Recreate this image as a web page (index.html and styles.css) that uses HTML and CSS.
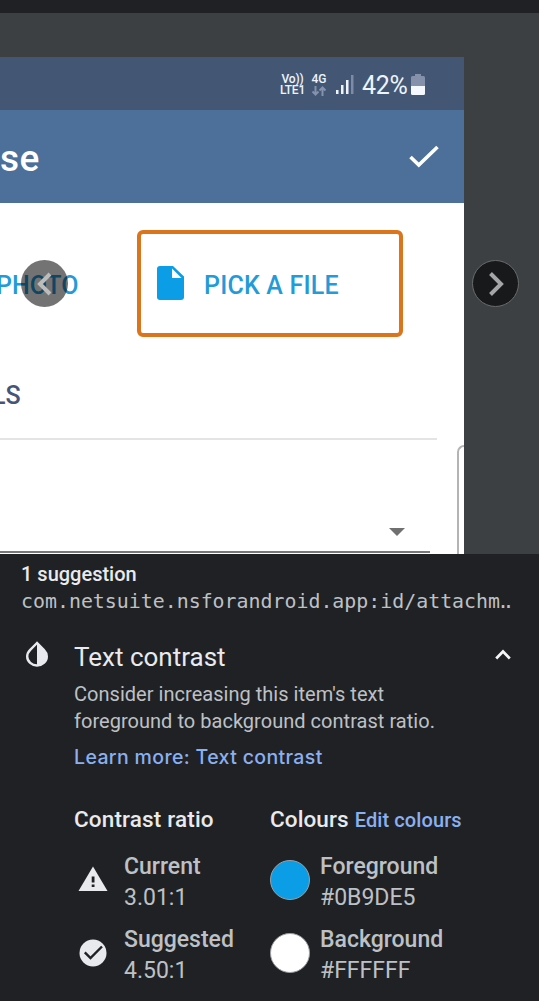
FILE: index.html
```html
<!DOCTYPE html>
<html lang="en">
<head>
<meta charset="utf-8">
<title>Text contrast</title>
<link rel="stylesheet" href="styles.css">
</head>
<body>
<main class="viewer">
  <section class="phone">
    <div class="status">
      <div class="volte"><span>Vo))</span><span>LTE1</span></div>
      <div class="network"><span>4G</span>
        <svg width="16" height="10" viewBox="0 0 16 10" fill="none" stroke="#8492ad" stroke-width="2"><path d="M4.500 0v8.500M1.500 5.500l3 3 3-3M11.500 10V1.500M8.500 4.500l3-3 3 3"/></svg>
      </div>
      <svg class="signal" width="18" height="20" viewBox="0 0 18 20"><path fill="#edf4ff" d="M0 15h2.500v4H0zM5 10h2.500v9H5zM10 5h2.500v14H10z"/><path fill="#7d8ba7" d="M15 0h2.500v19H15z"/></svg>
      <span class="percent">42%</span>
      <svg class="battery" width="14" height="21" viewBox="0 0 14 21"><path fill="#8591ab" d="M4 0h6v2h2.500q1.500 0 1.500 1.500V12H0V3.500Q0 2 1.500 2H4z"/><path fill="#f5f9ff" d="M0 12h14v7.500q0 1.500-1.500 1.500h-11Q0 21 0 19.500z"/></svg>
    </div>
    <div class="appbar">
      <span class="apptitle">se</span>
      <svg width="30" height="24" viewBox="0 0 30 24" fill="none" stroke="#fff" stroke-width="3.600"><path d="M1.500 12l8.300 8L28.500 2"/></svg>
    </div>
    <div class="actions">
      <span class="photo">PHOTO</span>
      <div class="pick">
        <svg width="27" height="34" viewBox="0 0 27 34"><path fill="#0b9de5" d="M3 0h13l11 10.500V31q0 3-3 3H3q-3 0-3-3V3q0-3 3-3z"/><path fill="#fff" d="M15 2.500V12h9.500z"/></svg>
        <span class="picktext">PICK A FILE</span>
      </div>
    </div>
    <div class="details">LS</div>
    <div class="form">
      <div class="select"><svg width="16" height="8" viewBox="0 0 16 8"><path fill="#707070" d="M0 0h16L8 8z"/></svg></div>
      <div class="nextfield"></div>
    </div>
  </section>
  <button class="nav prev" aria-label="Previous"><svg width="16" height="24" viewBox="0 0 16 24" fill="none" stroke="#bcbcbc" stroke-width="4"><path d="M13 2L3 12l10 10"/></svg></button>
  <button class="nav next" aria-label="Next"><svg width="16" height="24" viewBox="0 0 16 24" fill="none" stroke="#a5a6a8" stroke-width="4"><path d="M2.500 1.500L13 12 2.500 22.500"/></svg></button>
</main>
<section class="panel">
  <div class="count">1 suggestion</div>
  <div class="resource">com.netsuite.nsforandroid.app:id/attachm<span class="dots">..</span></div>
  <div class="issue">
    <svg class="drop" width="22" height="26" viewBox="0 0 22 26"><path fill="none" stroke="#e8eaed" stroke-width="2.400" d="M11 2L4.200 8.800C.2 12.800.2 18.200 4.200 21.800c3.800 3.500 9.800 3.500 13.600 0 4-3.600 4-9 0-13z"/><path fill="#e8eaed" d="M11 1.500l7 7c4 4 4 10 0 13.500-2 1.700-4.500 2.400-7 2.400z"/></svg>
    <div class="body">
      <div class="heading"><span>Text contrast</span><svg width="16" height="11" viewBox="0 0 16 11" fill="none" stroke="#f4f5f7" stroke-width="2.700"><path d="M1.200 9.500L8 2.500l6.800 7"/></svg></div>
      <p class="desc">Consider increasing this item's text<br>foreground to background contrast ratio.</p>
      <a class="learn">Learn more: Text contrast</a>
      <div class="columns">
        <div class="col ratios">
          <div class="coltitle">Contrast ratio</div>
          <div class="item"><svg class="mark" width="30" height="26" viewBox="0 0 30 26"><path fill="#e8eaed" d="M15 .5L29.500 25H.5z"/><path fill="#202124" d="M13.700 10.500h2.800v6h-2.800zM13.700 18.500h2.800v2.500h-2.800z"/></svg><div class="value"><b>Current</b><span>3.01:1</span></div></div>
          <div class="item"><svg class="mark" width="30" height="28" viewBox="0 0 30 28"><circle cx="15" cy="14" r="13.500" fill="#e8eaed"/><path fill="none" stroke="#202124" stroke-width="2.400" d="M6.800 13.300l5.700 5.700L24 7.500"/></svg><div class="value"><b>Suggested</b><span>4.50:1</span></div></div>
        </div>
        <div class="col colours">
          <div class="coltitle">Colours<a class="edit">Edit colours</a></div>
          <div class="item"><i class="swatch blue"></i><div class="value"><b>Foreground</b><span>#0B9DE5</span></div></div>
          <div class="item"><i class="swatch"></i><div class="value"><b>Background</b><span>#FFFFFF</span></div></div>
        </div>
      </div>
    </div>
  </div>
</section>
</body>
</html>
```

FILE: styles.css
```css
* { box-sizing: border-box; }
body { margin: 0; display: flow-root; width: 539px; height: 1001px; overflow: hidden; background: #202124; font-family: Roboto, "Noto Sans", sans-serif; color: #bdc1c6; white-space: nowrap; }
svg { display: block; flex: none; }
.viewer { position: relative; height: 541px; margin-top: 13px; padding-top: 44px; background: #3c4043; overflow: hidden; }
.phone { width: 463.600px; height: 497px; background: #fff; overflow: hidden; }
.status { height: 53px; background: #435775; display: flex; align-items: flex-start; padding: 17px 0 0 280px; color: #edf4ff; }
.volte, .network { display: flex; flex-direction: column; font-size: 12px; font-weight: 500; line-height: 11px; align-items: center; }
.volte { width: 25px; letter-spacing: -.2px; }
.network { width: 16px; margin-left: 6px; }
.network svg { margin-top: 1px; }
.signal { margin: 1px 0 0 9px; }
.percent { font-size: 25px; line-height: 24px; margin: 0 0 0 8px; width: 46px; letter-spacing: -.3px; }
.battery { margin-left: 3px; }
.appbar { height: 93px; background: #4c7099; display: flex; align-items: center; justify-content: space-between; padding-right: 25px; color: #fff; }
.apptitle { font-size: 37px; font-weight: 500; line-height: 42px; margin-top: 5px; letter-spacing: .4px; }
.appbar svg { margin-top: 1px; }
.actions { height: 135px; display: flex; align-items: flex-start; padding-top: 27px; color: #249bd7; font-size: 25px; font-weight: 500; line-height: 30px; }
.photo { width: 141px; margin: 41px 0 0 -4px; }
.pick { width: 266px; height: 107px; border: 4px solid #dc741b; border-radius: 6px; display: flex; align-items: center; padding-left: 16px; gap: 20px; }
.pick svg { margin-top: -1px; }
.picktext { margin-top: 5px; letter-spacing: .2px; }
.details { height: 102px; width: 437px; border-bottom: 2px solid #e4e4e4; color: #465577; font-size: 25px; line-height: 30px; font-weight: 500; padding-top: 43px; text-indent: -8px; }
.form { height: 115px; display: flex; justify-content: space-between; }
.select { width: 430px; height: 113px; border-bottom: 2px solid #777; display: flex; justify-content: flex-end; align-items: flex-end; padding: 0 25px 15px 0; }
.nextfield { width: 7px; height: 120px; margin-top: 5px; border: solid #b4b4b4; border-width: 2px 0 0 2px; border-radius: 9px 0 0 0; }
.nav { position: absolute; top: 247px; width: 47px; height: 47px; border-radius: 50%; border: 1px solid #6a6b6d; display: flex; align-items: center; justify-content: center; padding: 0; background: #18191b; }
.prev { left: 21px; border: 0; background: rgba(0,0,0,.55); }
.next { left: 472px; }
.panel { height: 447px; padding: 8px 0 0 22px; }
.count { font-size: 20px; font-weight: 500; line-height: 24px; color: #e8eaed; margin-left: -1px; }
.resource { margin: 3px 0 0 -1px; font-family: "DejaVu Sans Mono", monospace; font-size: 19.900px; line-height: 26px; }
.dots { margin-left: -3px; letter-spacing: -6.500px; }
.issue { display: flex; margin-top: 26px; }
.drop { margin: 0 26px 0 4px; }
.body { width: 465px; }
.heading { display: flex; justify-content: space-between; align-items: center; height: 32px; font-size: 26px; line-height: 32px; color: #e8eaed; padding-right: 28px; }
.heading svg { margin-top: -6px; }
.desc { margin: 8px 0 9px; font-size: 20px; line-height: 27px; letter-spacing: .03px; }
.learn { display: block; color: #8ab0f0; font: 500 19.500px/26px Inter, sans-serif; letter-spacing: .36px; }
.columns { display: flex; margin-top: 34px; }
.col { width: 196px; }
.colours { width: 240px; }
.coltitle { font-size: 22.500px; font-weight: 500; line-height: 30px; height: 47px; color: #e8eaed; letter-spacing: .1px; }
.ratios .coltitle { letter-spacing: .16px; }
.edit { color: #8ab0f0; font-size: 20px; margin-left: 6px; }
.item { display: flex; height: 72.500px; font-size: 23px; line-height: 31px; }
.mark { width: 30px; margin: 15px 16px 0 4px; }
.value { display: flex; flex-direction: column; }
.value b { font-weight: 500; }
.swatch { flex: none; width: 40px; height: 40px; margin: 9px 10px 0 0; border-radius: 50%; background: #fff; border: 1px solid #9ba0a3; }
.blue { background: #0b9de5; }
```
